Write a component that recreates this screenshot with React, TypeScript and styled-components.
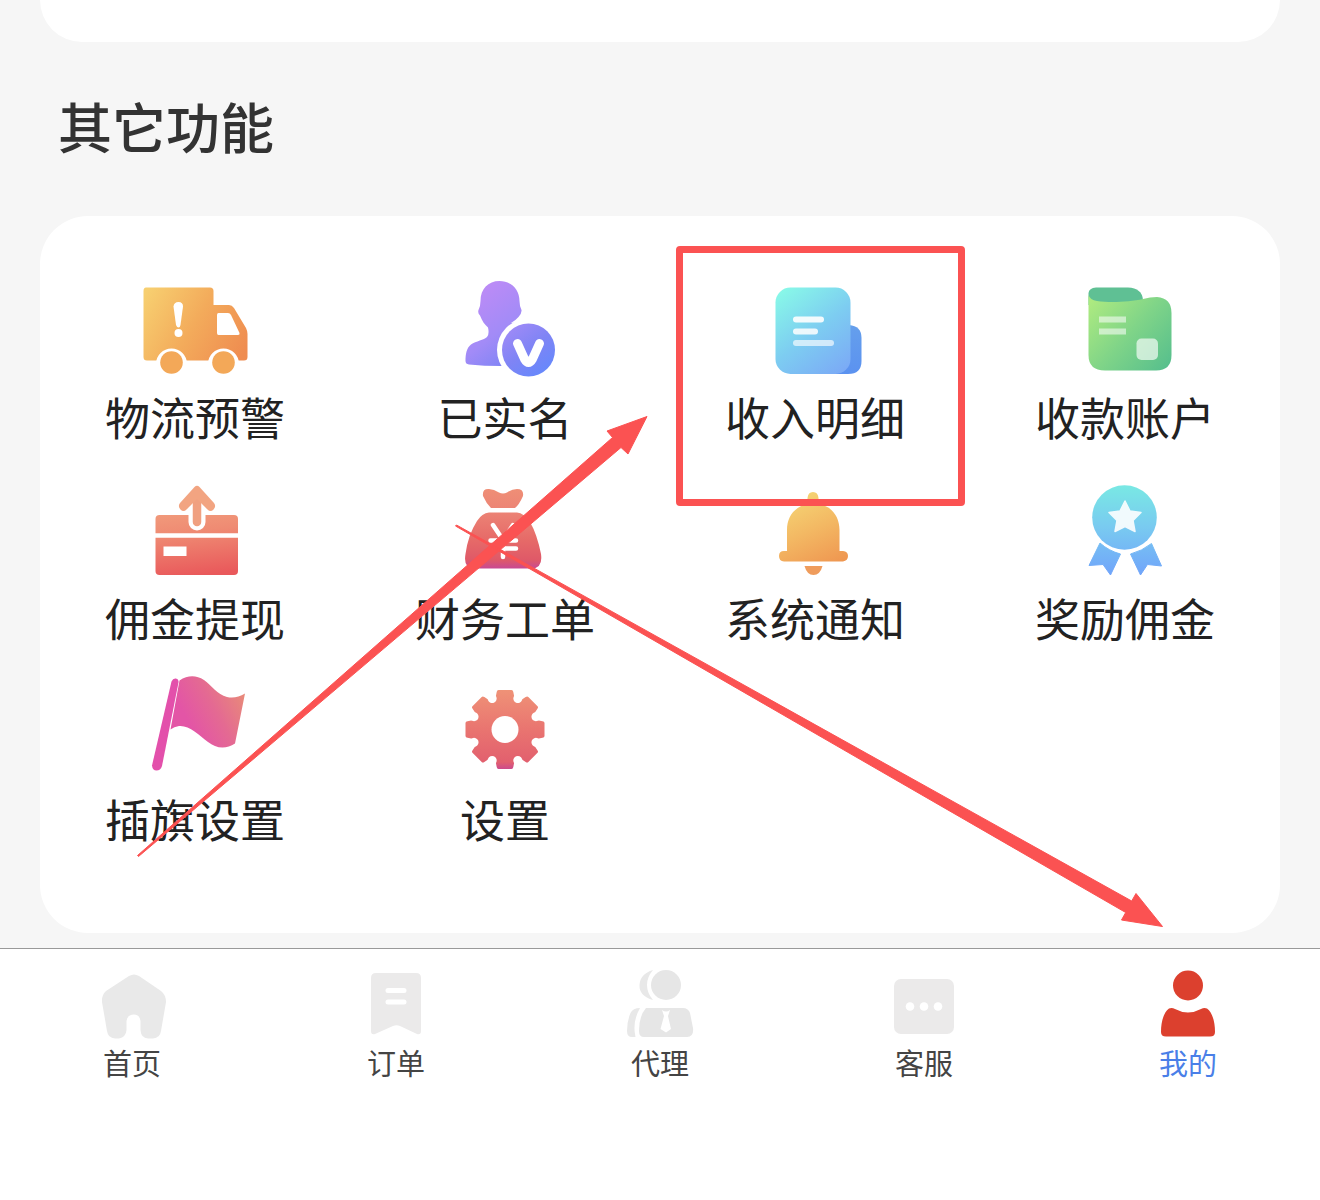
import React from "react";
import styled, { createGlobalStyle } from "styled-components";

const GlobalStyle = createGlobalStyle`
  *, *::before, *::after { box-sizing: border-box; }
  body {
    margin: 0;
    background: #f6f6f6;
    font-family: "Noto Sans CJK SC", "Noto Sans", sans-serif;
  }
`;

const Page = styled.div`
  position: relative;
  min-height: 100vh;
  display: flex;
  flex-direction: column;
  overflow: hidden;
`;

const Content = styled.main`
  padding: 0 40px 15px;
`;

const PreviousCard = styled.section`
  height: 42px;
  background: #fff;
  border-radius: 0 0 48px 48px;
`;

const Heading = styled.h2`
  margin: 0;
  padding: 44px 18px 50px;
  font-size: 54px;
  line-height: 80px;
  font-weight: 500;
  color: #333;
`;

const Card = styled.section`
  display: grid;
  grid-template-columns: repeat(4, 1fr);
  padding: 54px 0 60px;
  background: #fff;
  border-radius: 48px;
`;

const Tile = styled.button`
  position: relative;
  display: flex;
  flex-direction: column;
  align-items: center;
  gap: 7px;
  height: 201px;
  padding: 0;
  border: 0;
  background: none;
  font: inherit;
  font-size: 45px;
  line-height: 60px;
  color: #222;
  white-space: nowrap;
  cursor: pointer;
`;

const TileIcon = styled.svg`
  width: 120px;
  height: 110px;
  flex: none;
`;

const Highlight = styled.span`
  position: absolute;
  z-index: 1;
  top: -24px;
  left: 16px;
  right: 5px;
  height: 260px;
  border: 7px solid #fb5252;
  border-radius: 4px;
  pointer-events: none;
`;

const TabBar = styled.nav`
  flex: 1;
  display: grid;
  grid-template-columns: repeat(5, 1fr);
  align-items: start;
  padding: 16px 0 96px;
  border-top: 1px solid #999;
  background: #fff;
`;

const Tab = styled.a<{ $active?: boolean }>`
  display: flex;
  flex-direction: column;
  align-items: center;
  font-size: 29px;
  line-height: 38px;
  color: ${(p) => (p.$active ? "#4a7fe8" : "#444")};
  text-decoration: none;
`;

const TabIcon = styled.svg`
  width: 80px;
  height: 78px;
`;

const Arrows = styled.svg`
  position: absolute;
  z-index: 2;
  top: 0;
  left: 0;
  width: 100%;
  height: 1200px;
  pointer-events: none;
`;

type GradientProps = {
  id: string;
  from: [number, number];
  to: [number, number];
  stops: [number, string][];
};

const Gradient = ({ id, from, to, stops }: GradientProps) => (
  <linearGradient id={id} gradientUnits="userSpaceOnUse" x1={from[0]} y1={from[1]} x2={to[0]} y2={to[1]}>
    {stops.map(([offset, color]) => (
      <stop key={offset} offset={offset} stopColor={color} />
    ))}
  </linearGradient>
);

const Truck = (
  <>
    <Gradient id="truck" from={[146, 292]} to={[246, 350]} stops={[[0, "#f7cf70"], [0.5, "#f3ab5b"], [1, "#ef8c50"]]} />
    <path fill="url(#truck)" d="M146 287.500H210Q213.500 287.500 213.500 291V305H229Q232 305 234 308L246 328Q247.500 331 247.500 334V357Q247.500 360.500 244 360.500H147Q143.500 360.500 143.500 357V291Q143.500 287.500 146 287.500Z" />
    <path fill="#fff" d="M218.500 313H228Q230 313 231 315L239.500 333Q240 335 238 335H218.500Q217 335 217 333V315Q217 313 218.500 313Z" />
    <path fill="#fff" d="M173.500 306.500Q174 302 178.500 302T183 306.500L180.500 325Q180 327.500 178.500 327.500T176 325Z" />
    <circle cx="178.500" cy="333" r="4" fill="#fff" />
    <path fill="#fff" d="M156 364a15.500 15.500 0 0 1 31 0ZM208 364a15.500 15.500 0 0 1 31 0Z" />
    <circle cx="171.500" cy="362.500" r="11.300" fill="#f3a858" />
    <circle cx="223.500" cy="362.500" r="11.300" fill="#f3a858" />
  </>
);

const Verified = (
  <>
    <Gradient id="verified" from={[482, 285]} to={[545, 370]} stops={[[0, "#bd8bf6"], [0.45, "#a28bf7"], [0.75, "#7f84f5"], [1, "#6888fb"]]} />
    <path fill="url(#verified)" d="M499.500 281C488 281 480.500 289 480.500 301Q480.500 306 478.500 310Q477.500 313 480 315.500C482 321 485 325 488 327.500Q489.500 334 487 337C484 340 476 341 471 344.500C466.500 348 465.500 354 465.500 361Q465.500 364 469 364.500Q484 366 501 366H525V322L511 323Q516 320 518.500 317Q522 313 521.500 310Q519.500 306 519.500 301C519.500 289 511 281 499.500 281Z" />
    <circle cx="528.500" cy="350" r="31.500" fill="#fff" />
    <circle cx="528.500" cy="350" r="26.500" fill="url(#verified)" />
    <path fill="none" stroke="#fff" strokeWidth="9" strokeLinecap="round" strokeLinejoin="round" d="M517.500 343.500L524.500 359Q528.500 366 532.500 359L539.500 343.500" />
  </>
);

const Income = (
  <>
    <Gradient id="income" from={[782, 290]} to={[846, 372]} stops={[[0, "#88f8e8"], [0.5, "#7dcdf1"], [1, "#7ba9f6"]]} />
    <Gradient id="incomeBack" from={[850, 325]} to={[850, 374]} stops={[[0, "#659fec"], [1, "#5b92f0"]]} />
    <path fill="url(#incomeBack)" d="M835 325H849Q861.500 326 861.500 338V361Q861.500 374 848 374H835Z" />
    <rect x="775.500" y="287.500" width="75" height="86.500" rx="15" fill="url(#income)" />
    <g stroke="#fff" strokeWidth="6" strokeLinecap="round">
      <path d="M796 319.500H821" opacity="0.9" />
      <path d="M796 331.500H815" opacity="0.85" />
      <path d="M796 343H831" opacity="0.65" />
    </g>
  </>
);

const Account = (
  <>
    <Gradient id="account" from={[1092, 300]} to={[1168, 368]} stops={[[0, "#adea80"], [0.5, "#7fd488"], [1, "#57bf8d"]]} />
    <path fill="#5fc094" d="M1088.500 305V293Q1089 288 1096 287.500H1128Q1142 288 1143 300L1120 308Z" />
    <path fill="url(#account)" d="M1088.500 295Q1090 300 1097 301C1110 303 1130 302 1143 299Q1150 297 1157 297Q1171.500 298 1171.500 313V355Q1171.500 370.500 1156 370.500H1105Q1088.500 370.500 1088.500 355Z" />
    <path stroke="#fff" strokeWidth="6" opacity="0.55" d="M1099 319.500H1126M1099 331.500H1126" />
    <rect x="1136.500" y="338.500" width="21.500" height="21.500" rx="5" fill="#fff" opacity="0.65" />
  </>
);

const Withdraw = (
  <>
    <Gradient id="withdraw" from={[190, 487]} to={[200, 575]} stops={[[0, "#f3aa83"], [0.5, "#ef8b73"], [1, "#e9595b"]]} />
    <rect x="155.500" y="515" width="82.500" height="60" rx="4" fill="url(#withdraw)" />
    <path stroke="#fff" strokeWidth="4.500" d="M155 535.500H239" />
    <rect x="163.500" y="546.500" width="23" height="9.500" fill="#fff" />
    <path stroke="#fff" strokeWidth="17" strokeLinecap="round" d="M197 509V522" />
    <path fill="none" stroke="#f0a080" strokeWidth="8.500" strokeLinecap="round" d="M197 494V522" />
    <path fill="#f2a481" d="M194.500 487Q197 484.500 199.500 487L214 503Q216.500 506.500 213.500 509.500T207.500 509.500L197 499L186.500 509.500Q183.500 512.500 180.500 509.500T180 503Z" />
  </>
);

const MoneyBag = (
  <>
    <Gradient id="bag" from={[503, 488]} to={[503, 568]} stops={[[0, "#ef8f76"], [0.3, "#ec8375"], [0.65, "#e66a68"], [0.9, "#df5968"], [1, "#c94a91"]]} />
    <path fill="url(#bag)" d="M483 496Q482 488.500 489 489Q494 489 499 492.500Q503 494.500 507 492.500Q512 489 517 489Q524 489 523 496Q519 505 515 508H491Q486 503 483 496Z" />
    <path fill="url(#bag)" d="M489 512.500H517Q524 513 530 522Q537 534 541 554Q543 568 532 568.500H474Q463 568 465.500 554Q468 535 477 521Q482 513 489 512.500Z" />
    <path fill="none" stroke="#fff" strokeWidth="4.500" strokeLinecap="round" d="M493 525L503 540L513 525M490.500 540.500H516M490.500 548.500H516M503 541V557" />
  </>
);

const Bell = (
  <>
    <Gradient id="bell" from={[792, 495]} to={[826, 568]} stops={[[0, "#f5d675"], [0.5, "#f3b863"], [1, "#ef9751"]]} />
    <path fill="url(#bell)" d="M807.500 498Q808 492 813 492T818.500 498V504C832 506 839.500 517 839.500 530V551H843Q848 551.500 848 556T843 561.500H784Q779 561 779 556T784 551H787V530C787 517 794 507 807.500 504Z" />
    <path fill="#ef9c5c" d="M804.500 566H822.500Q820 575 813.500 575T804.500 566Z" />
  </>
);

const Medal = (
  <>
    <Gradient id="medal" from={[1125, 486]} to={[1125, 575]} stops={[[0, "#79e8e4"], [0.45, "#79cbf0"], [1, "#70a4fa"]]} />
    <circle cx="1124.500" cy="517.500" r="32.300" fill="url(#medal)" />
    <path fill="#fff" opacity="0.9" stroke="#fff" strokeLinejoin="round" strokeWidth="1.500" d="M1125 501L1130 511L1141 512.500L1133 520.500L1135 531.500L1125 526.500L1115 531.500L1117 520.500L1109 512.500L1120 511Z" />
    <path fill="url(#medal)" stroke="url(#medal)" strokeWidth="1" strokeLinejoin="round" d="M1100 543Q1109 551 1120.500 554L1110.500 575L1103 564.500L1089 565.500Z M1151.500 543.500Q1142 551 1130.500 554L1140.500 575L1147.500 564.500L1161.500 566Z" />
  </>
);

const Flag = (
  <>
    <Gradient id="flag" from={[190, 725]} to={[243, 697]} stops={[[0, "#e355a6"], [0.5, "#e46a92"], [1, "#e8887b"]]} />
    <path fill="#e350ab" d="M171.500 681.500Q173 678 176 678.500T178.500 682.500L162 766Q160.500 770.500 156.500 770.500T152 765.500Z" />
    <path fill="url(#flag)" d="M179.500 680.500C188 675 196 675 204 680C212 686 217 694 227 697Q236 699 245 693.500L235 743.500C226 749.500 216 748.500 208 742C199 735 189 725 179 726Q174 726.500 170.500 729.500Z" />
  </>
);

const Gear = (
  <>
    <Gradient id="gear" from={[505, 690]} to={[505, 770]} stops={[[0, "#ef9277"], [0.5, "#e97470"], [0.9, "#e2606e"], [1, "#c94790"]]} />
    <mask id="gearShape" maskUnits="userSpaceOnUse" x="460" y="685" width="90" height="90">
      <circle cx="505" cy="729.500" r="31" fill="#fff" />
      {[0, 45, 90, 135].map((angle) => (
        <path key={angle} transform={`rotate(${angle} 505 729.500)`} fill="#fff" d="M498.500 690H511.500Q513 690 513.300 692L515.500 703V756L513.300 767Q513 769 511.500 769H498.500Q497 769 496.700 767L494.500 756V703L496.700 692Q497 690 498.500 690Z" />
      ))}
      {[22.5, 67.5, 112.5, 157.5, 202.5, 247.5, 292.5, 337.5].map((angle) => (
        <circle key={angle} cx="505" cy="696" r="4.500" transform={`rotate(${angle} 505 729.500)`} fill="#000" />
      ))}
      <circle cx="505" cy="729.500" r="13.500" fill="#000" />
    </mask>
    <rect x="460" y="685" width="90" height="90" fill="url(#gear)" mask="url(#gearShape)" />
  </>
);

const HomeIcon = (
  <path fill="#e9e9e9" d="M129 976Q134 973 139 976L161 991Q166 995 166 1002L161 1031Q160 1038 153 1038.500H148Q141 1038 140.500 1030V1021Q140 1015 134 1014.500Q127 1015 126.500 1021V1030Q126 1037 119 1038.500H115Q108 1038 107 1031L102 1002Q101.500 995 106 991Z" />
);

const OrderIcon = (
  <>
    <path fill="#ebeaea" d="M376 973H416Q421 973 421 978V1031Q421 1035 417 1034L400 1026Q396.500 1024.500 393 1026L375 1034Q371 1035 371 1031V978Q371 973 376 973Z" />
    <path stroke="#fff" strokeWidth="5" strokeLinecap="round" d="M388 990.500H404M388 1002H404" />
  </>
);

const AgentIcon = (
  <>
    <circle cx="666" cy="985" r="15" fill="#e6e6e6" />
    <path fill="#e8e8e8" d="M653 970Q640 974 639.500 985T653 1000Q647 993 647 985T653 970Z" />
    <path fill="#e6e6e6" d="M646 1008H683Q688 1008 690 1013L693 1028Q694 1037 687 1037H644Q639 1037 639 1031Q639 1016 646 1008Z" />
    <path fill="#e8e8e8" d="M640 1008Q633 1008 630.500 1013Q627 1021 627 1031Q627 1037 632 1037H635.500Q632 1022 640 1008Z" />
    <path fill="#fff" d="M662 1010Q666 1013 670 1010L668 1016L671 1029L666 1032.500L660.500 1029L664 1016Z" />
  </>
);

const SupportIcon = (
  <>
    <rect x="894" y="979" width="60" height="55" rx="7" fill="#ebeaea" />
    <g fill="#fff">
      <circle cx="910" cy="1006.500" r="4.300" />
      <circle cx="924" cy="1006.500" r="4.300" />
      <circle cx="938" cy="1006.500" r="4.300" />
    </g>
  </>
);

const MineIcon = (
  <g fill="#dc402e">
    <circle cx="1188" cy="985.500" r="15" />
    <path d="M1169 1008.500Q1172 1007.500 1175 1009Q1188 1016 1201 1009Q1204 1007.500 1207 1008.500C1213 1013 1215 1023 1215 1032Q1215 1036.500 1210 1036.500H1166Q1161 1036.500 1161 1032C1161 1023 1163 1013 1169 1008.500Z" />
  </g>
);

const features = [
  { label: "物流预警", icon: Truck, box: "135 270 120 110" },
  { label: "已实名", icon: Verified, box: "445 270 120 110" },
  { label: "收入明细", icon: Income, box: "755 270 120 110", highlighted: true },
  { label: "收款账户", icon: Account, box: "1065 270 120 110" },
  { label: "佣金提现", icon: Withdraw, box: "135 471 120 110" },
  { label: "财务工单", icon: MoneyBag, box: "445 471 120 110" },
  { label: "系统通知", icon: Bell, box: "755 471 120 110" },
  { label: "奖励佣金", icon: Medal, box: "1065 471 120 110" },
  { label: "插旗设置", icon: Flag, box: "135 672 120 110" },
  { label: "设置", icon: Gear, box: "445 672 120 110" },
];

const tabs = [
  { label: "首页", icon: HomeIcon, box: "92 965 80 78" },
  { label: "订单", icon: OrderIcon, box: "356 965 80 78" },
  { label: "代理", icon: AgentIcon, box: "620 965 80 78" },
  { label: "客服", icon: SupportIcon, box: "884 965 80 78" },
  { label: "我的", icon: MineIcon, box: "1148 965 80 78", active: true },
];

export default function App() {
  return (
    <Page>
      <GlobalStyle />
      <Content>
        <PreviousCard />
        <Heading>其它功能</Heading>
        <Card>
          {features.map((f) => (
            <Tile key={f.label} type="button">
              <TileIcon viewBox={f.box} aria-hidden="true">{f.icon}</TileIcon>
              <span>{f.label}</span>
              {f.highlighted && <Highlight />}
            </Tile>
          ))}
        </Card>
      </Content>
      <TabBar>
        {tabs.map((t) => (
          <Tab key={t.label} href="#" $active={t.active} aria-current={t.active ? "page" : undefined}>
            <TabIcon viewBox={t.box} aria-hidden="true">{t.icon}</TabIcon>
            <span>{t.label}</span>
          </Tab>
        ))}
      </TabBar>
      <Arrows viewBox="0 0 1320 1200" aria-hidden="true">
        <g fill="#fb5252" stroke="#fb5252" strokeWidth="1" strokeLinejoin="round">
          <path d="M137.500 855.500L612.500 437.500L607 431L647 416.500L628 454L621 447.500L138.500 856.500Z" />
          <path d="M456.500 525L1131.700 901L1136 893.500L1162.500 926.500L1121.500 920L1125.700 912.500L455.500 526Z" />
        </g>
      </Arrows>
    </Page>
  );
}
